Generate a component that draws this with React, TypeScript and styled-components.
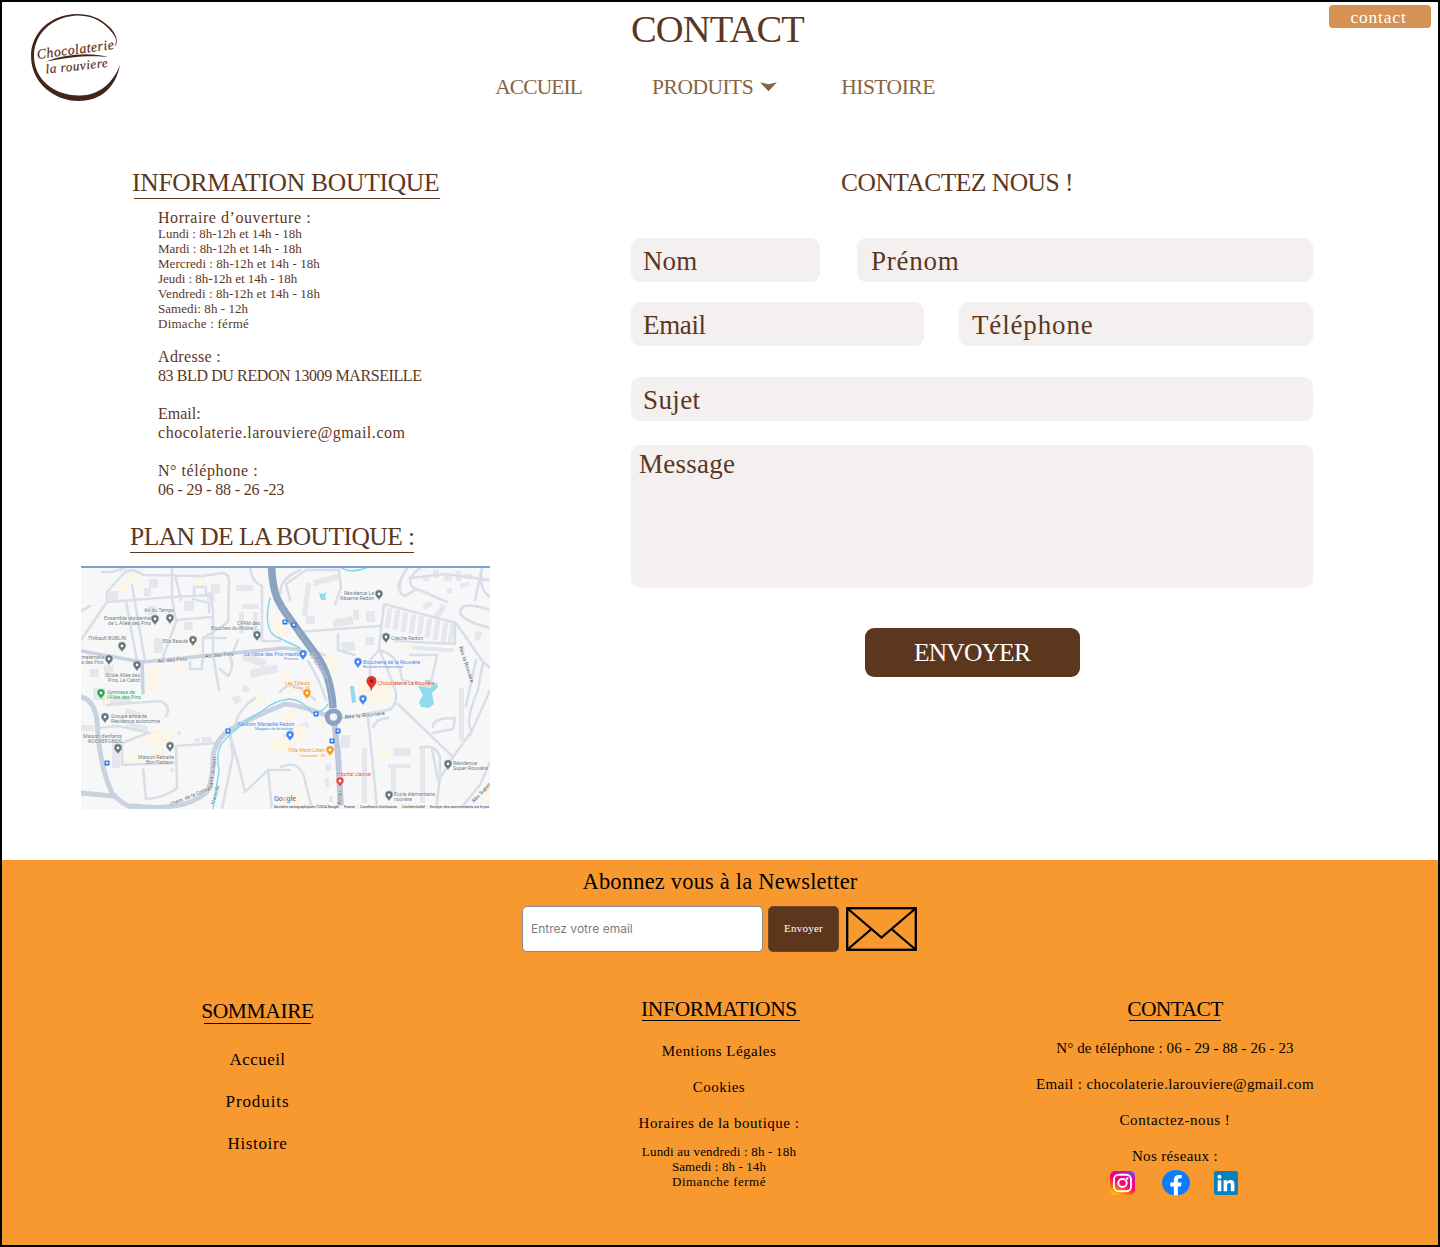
import React from "react";
import styled, { createGlobalStyle } from "styled-components";

const brown = "#5c371e";
const serif = `"Liberation Serif", "Times New Roman", serif`;

const GlobalStyle = createGlobalStyle`
  *, *::before, *::after { box-sizing: border-box; }
  body { margin: 0; background: #fff; font-family: ${serif}; color: ${brown}; }
  h1, h2, h3, p, ul { margin: 0; padding: 0; font-weight: 400; }
  ul { list-style: none; }
  a { color: inherit; text-decoration: none; }
  button { font-family: inherit; border: 0; padding: 0; cursor: pointer; }
  svg { display: block; flex: none; }
`;

type Spaced = { $ls?: number };

const Page = styled.div`
  width: 1440px;
  height: 1247px;
  border: 2px solid #000;
  display: flex;
  flex-direction: column;
  overflow: hidden;
  white-space: nowrap;
`;

const Header = styled.header`
  display: grid;
  grid-template-columns: 280px 1fr 280px;
  height: 124px;
`;

const LogoLink = styled.a`
  padding: 8px 0 0 24px;
`;

const HeaderCenter = styled.div`
  display: flex;
  flex-direction: column;
  align-items: center;
`;

const PageTitle = styled.h1`
  font-size: 38.5px;
  line-height: 44px;
  letter-spacing: -0.8px;
  margin: 5px 5px 0 0;
`;

const Nav = styled.nav`
  display: flex;
  align-items: center;
  height: 24px;
  margin: 24px 10px 0 0;
  color: #88643f;
`;

const NavLink = styled.a<Spaced & { $gap?: number }>`
  display: flex;
  align-items: center;
  gap: 7px;
  font-size: 21.5px;
  line-height: 24px;
  letter-spacing: ${(p) => p.$ls ?? 0}px;
  margin-right: ${(p) => p.$gap ?? 0}px;
`;

const ContactButton = styled.button`
  justify-self: end;
  width: 102px;
  height: 23px;
  margin: 3px 7px 0 0;
  border-radius: 4px;
  background: #d49254;
  color: #fff;
  font-size: 17.5px;
  line-height: 23px;
  letter-spacing: 0.8px;
  padding-top: 1px;
  padding-right: 3px;
`;

const Main = styled.main`
  display: flex;
  height: 734px;
`;

const ShopColumn = styled.section`
  width: 629px;
  padding: 43px 0 0 79px;
`;

const SectionTitle = styled.h2<Spaced>`
  font-size: 25.5px;
  line-height: 28px;
  letter-spacing: ${(p) => p.$ls ?? 0}px;
`;

const ShopTitle = styled(SectionTitle)<{ $indent: number }>`
  margin-left: ${(p) => p.$indent}px;
`;

const Rule = styled.div<{ $width: number; $indent?: number; $color?: string }>`
  width: ${(p) => p.$width}px;
  height: 1px;
  margin-left: ${(p) => p.$indent ?? 0}px;
  background: ${(p) => p.$color ?? brown};
`;

const TitleRule = styled(Rule)`
  margin-top: 1px;
`;

const Details = styled.div`
  padding: 9px 0 5px 77px;
`;

const DetailLine = styled.p<Spaced>`
  font-size: 16px;
  line-height: 19px;
  letter-spacing: ${(p) => p.$ls ?? 0}px;
`;

const HourLine = styled.p<Spaced>`
  font-size: 13px;
  line-height: 15px;
  letter-spacing: ${(p) => p.$ls ?? 0}px;
`;

const Hours = styled.div`
  margin: -1px 0 16px;
`;

const DetailGroup = styled.div`
  margin-bottom: 19px;
`;

const MapFrame = styled.div`
  width: 409px;
  height: 243px;
  margin-top: 13px;
`;

const FormColumn = styled.form`
  width: 682px;
  padding-top: 43px;
  display: flex;
  flex-direction: column;
  align-items: center;
`;

const FormTitle = styled(SectionTitle)`
  padding-right: 30px;
`;

const FieldRow = styled.div<{ $columns: string; $gap?: number; $top: number }>`
  width: 100%;
  display: grid;
  grid-template-columns: ${(p) => p.$columns};
  column-gap: ${(p) => p.$gap ?? 0}px;
  margin-top: ${(p) => p.$top}px;
`;

const Field = styled.label<Spaced & { $pad?: number }>`
  height: 44px;
  border-radius: 9px;
  background: #f4f0ef;
  padding: 1px 0 0 ${(p) => p.$pad ?? 12}px;
  font-size: 27px;
  line-height: 44px;
  letter-spacing: ${(p) => p.$ls ?? 0}px;
`;

const MessageField = styled(Field)`
  height: 143px;
  line-height: 37px;
`;

const SubmitButton = styled.button`
  width: 215px;
  height: 49px;
  margin-top: 40px;
  border-radius: 9px;
  background: ${brown};
  color: #fff;
  font-size: 25.5px;
  line-height: 49px;
  letter-spacing: -0.8px;
`;

const Footer = styled.footer`
  flex: 1;
  background: #f8992f;
  color: #000;
`;

const NewsletterTitle = styled.h2`
  text-align: center;
  font-size: 22.5px;
  line-height: 26px;
  letter-spacing: 0.18px;
  padding: 9px 0 0;
`;

const NewsletterRow = styled.div`
  display: flex;
  align-items: center;
  margin: 10px 0 0 520px;
  height: 47px;
`;

const EmailBox = styled.label`
  width: 241px;
  height: 46px;
  border: 1px solid #8b8b8b;
  border-radius: 5px;
  background: #fff;
  color: #7d7d7d;
  padding-left: 8px;
  font: 12px/43px Inter, sans-serif;
`;

const NewsletterButton = styled.button`
  width: 71px;
  height: 46px;
  margin: 0 7px 0 5px;
  border: 1px solid #734622;
  border-radius: 5px;
  background: ${brown};
  color: #fff;
  font-size: 11px;
  letter-spacing: 0.25px;
  padding-bottom: 2px;
`;

const FooterColumns = styled.div`
  display: grid;
  grid-template-columns: 512px 412px 498px;
  padding-top: 45px;
`;

const FooterColumn = styled.section<{ $top: number; $shift?: number }>`
  display: flex;
  flex-direction: column;
  align-items: center;
  padding-top: ${(p) => p.$top}px;
  padding-right: ${(p) => p.$shift ?? 0}px;
`;

const FooterTitle = styled.h3<Spaced & { $height?: number }>`
  font-size: 21.5px;
  line-height: 24px;
  height: ${(p) => p.$height ?? 24}px;
  letter-spacing: ${(p) => p.$ls ?? 0}px;
`;

const FooterList = styled.ul<{ $top: number; $size: number; $step: number }>`
  margin-top: ${(p) => p.$top}px;
  font-size: ${(p) => p.$size}px;
  line-height: ${(p) => p.$step}px;
  text-align: center;
`;

const FooterItem = styled.li<Spaced>`
  letter-spacing: ${(p) => p.$ls ?? 0}px;
`;

const FooterHours = styled.div`
  text-align: center;
  margin-top: 3px;
`;

const Socials = styled.div`
  display: flex;
  align-items: center;
  height: 26px;
  margin: -4px 3px 0 0;
`;

const SocialLink = styled.a<{ $gap?: number }>`
  margin-right: ${(p) => p.$gap ?? 0}px;
`;

const Logo = () => (
  <svg width="100" height="96" viewBox="26 10 100 96">
    <path
      fill="#43261a"
      d="M114.500 46.500C119 43 117 34 109 26.500C100 17.500 89 14 77 14C50 14.500 31 33 31 56C31 82 53 101 79 101C101 101 116 87 120 65C113 83 99 95.500 80 95.500C54 96 34 79 34 56C34 34 52 16.500 77 15.500C89 15.500 99 19 107.500 27.500C113 33 117.500 39 115.800 43Z"
    />
    <path fill="#43261a" d="M46 61.500C62 55 89 51.500 108 57C91 54.800 67 57 46 61.500Z" />
    <g fill="#5a2c1b" fontFamily="'Liberation Serif', serif" fontStyle="italic" stroke="#5a2c1b" strokeWidth="0.2">
      <text transform="translate(37.500 59) rotate(-7.500)" fontSize="14" textLength="78" letterSpacing="0.6" lengthAdjust="spacingAndGlyphs">
        Chocolaterie
      </text>
      <text transform="translate(46 73.500) rotate(-6)" fontSize="13" textLength="63" letterSpacing="0.6" lengthAdjust="spacingAndGlyphs">
        la rouviere
      </text>
    </g>
  </svg>
);

const road = "M81 640L107 602V592L125 572Q132 567 143 575L202 576L223 573Q229 574 229 582L228 622Q222 627 203 638V662M102 572L112 572L125 568M107 602L172 597L211 595L213 612V655L219 690M126 601L137 661M132 585L145 661M172 568V598L176 622L162 660M175 575L181 600M176 620L212 617M194 596V587H206V595M193 599L209 603V612M203 638H226M228 653Q236 665 228 676L220 669M250 568Q252 582 262 586V640M238 640L233 652M262 641H280M81 611L90 606M190 662V669H202V660M107 705L160 701Q172 706 166 716M97 728L118 726L150 733M176 746L217 743M176 746L177 788Q165 798 146 799L143 769M122 765L175 763M122 765V743L148 733M230 735L233 755L222 809M230 735Q238 760 245 792L268 770L272 809M268 770L290 770M236 723Q238 710 255 698M384 604L456 623L483 662L478 690Q464 722 472 731L453 757L440 778L436 809M384 604L379 648L396 692Q397 708 388 710L341 718M398 704L453 757M368 717L377 807M298 632L380 626M338 634V650L355 655M455 623V644L395 641M407 568Q392 591 405 596L417 589L447 602M420 568Q402 582 417 590M410 578L445 574L490 580M490 610Q460 600 460 613Q465 622 490 628M290 655Q310 648 325 655M379 650L370 660V690M379 650Q400 655 402 680L430 687L437 655L410 655M281 594Q278 580 300 570M290 600L286 584L306 570L339 570L341 588L335 604M308 661Q320 680 326 700M280 692Q290 680 303 690L315 700M373 727L378 720L388 718M433 727Q432 718 455 718L453 729L433 733M420 748Q435 743 440 757V775M432 749L438 780M460 809L480 785L490 762M281 767Q302 758 306 785L312 809M482 568L475 600M483 662L490 668M490 690Q478 718 470 735M482 568Q478 590 490 597M476 660L466 706";

const blocks: [number, number, number, number, number?][] = [
  [109, 591, 9, 9], [149, 579, 9, 9], [144, 588, 7, 8], [211, 584, 9, 9], [207, 592, 8, 9], [184, 601, 10, 10],
  [154, 638, 9, 15], [148, 606, 8, 9], [184, 622, 9, 8], [236, 585, 17, 6], [242, 604, 17, 5], [239, 612, 5, 21],
  [253, 612, 5, 21], [104, 665, 9, 12], [90, 669, 9, 8], [242, 656, 24, 8, 20], [250, 667, 28, 8, -12],
  [304, 583, 5, 33, 8], [313, 577, 26, 6, -15], [306, 616, 9, 8], [333, 618, 20, 8, -10], [353, 610, 6, 10], [341, 642, 14, 9, -8],
  [365, 637, 9, 8], [366, 611, 9, 11], [386, 608, 5, 20, 8], [394, 610, 5, 20, 8], [402, 612, 5, 20, 8], [410, 614, 5, 20, 8],
  [418, 616, 5, 20, 8], [426, 618, 5, 20, 8], [434, 620, 5, 20, 8], [442, 622, 5, 20, 8], [449, 623, 5, 20, 8], [412, 647, 42, 4, 4],
  [437, 604, 6, 15, 32], [423, 602, 9, 6, -30], [433, 570, 6, 8], [444, 576, 8, 5, 15], [456, 571, 5, 10], [460, 583, 10, 4, -15], [447, 588, 5, 5],
  [423, 576, 6, 5], [397, 582, 5, 7], [475, 631, 6, 9, 20], [464, 574, 8, 5],
  [93, 688, 12, 12], [103, 698, 28, 6, -8], [125, 710, 15, 7, 20], [80, 725, 14, 6], [112, 740, 8, 28], [126, 724, 22, 5, 12],
  [194, 738, 6, 4], [202, 737, 10, 5], [177, 731, 4, 4], [233, 696, 8, 7, -25], [242, 686, 7, 6, 20], [170, 768, 4, 4],
  [282, 728, 28, 6, -30], [341, 735, 9, 13], [362, 748, 5, 55], [393, 748, 18, 8], [388, 764, 23, 4], [391, 766, 5, 30],
  [420, 748, 5, 55], [459, 688, 5, 53], [325, 764, 6, 7], [325, 778, 4, 9], [329, 796, 4, 6],
];

const sand: [number, number, number, number, number?][] = [
  [127, 573, 9, 8], [119, 583, 8, 8], [195, 578, 9, 8], [191, 640, 8, 8], [150, 667, 8, 24], [165, 617, 12, 7], [119, 646, 9, 6], [104, 700, 6, 5],
  [140, 732, 32, 9], [155, 733, 7, 32], [124, 756, 38, 5], [175, 666, 7, 5], [258, 693, 6, 10], [275, 621, 12, 14, -35],
  [324, 656, 14, 13, -25], [359, 680, 30, 22], [270, 738, 25, 12, -18], [293, 726, 13, 12], [379, 750, 10, 8], [404, 645, 8, 5],
  [281, 676, 11, 7, 30], [317, 722, 8, 4], [283, 712, 14, 7, -20], [484, 790, 8, 13, 30], [329, 782, 6, 4], [265, 590, 3, 6],
];

const pins: [number, number, string][] = [
  [155, 620, "#627782"], [170, 619, "#627782"], [122, 647, "#627782"], [193, 641, "#627782"], [109, 660, "#627782"],
  [137, 666, "#627782"], [257, 636, "#627782"], [379, 595, "#627782"], [386, 638, "#627782"], [105, 718, "#627782"],
  [118, 749, "#627782"], [170, 747, "#627782"], [448, 765, "#627782"], [389, 796, "#627782"], [101, 694, "#2da44e"],
  [307, 694, "#f29a1f"], [330, 751, "#f29a1f"], [303, 655, "#4285f4"], [358, 663, "#4285f4"], [363, 700, "#4285f4"],
  [290, 736, "#4285f4"], [340, 782, "#ea4b41"],
];

type Label = [string, number, number, number, string, number?];
const ink = "#6c7d88";
const labels: Label[] = [
  ["Air du Temps", 144, 612, 30, ink], ["Ensemble résidentiel", 104, 620, 48, ink], ["de L Allée des Pins", 108, 625, 43, ink],
  ["Thibault BOBLIN", 88, 640, 38, ink], ["Ella Beauté", 163, 643, 25, ink], ["CPAM des", 237, 625, 23, ink],
  ["Bouches-du-Rhône /…", 211, 630, 49, ink], ["maternelle", 81.5, 659, 23, ink], ["e des Pins", 81.5, 664, 22, ink],
  ["École Allée des", 106, 677, 34, ink], ["Pins, Le Cabot", 108, 682, 32, ink], ["Gymnase de", 107, 694, 28, "#35a05a"],
  ["l'Allée des Pins", 107, 699, 34, "#35a05a"], ["Groupe entraide", 111, 718, 36, ink], ["Résidence autonomie", 111, 723, 49, ink],
  ["Maison d'enfants", 83, 738, 39, ink], ["ROCHEFONDS", 88, 743, 34, ink], ["Maison Retraite", 138, 759, 36, ink],
  ["Bon Pasteur", 146, 764, 27, ink], ["Résidence La", 344, 595, 30, ink], ["Réserve Redon", 340, 600, 34, ink],
  ["Crèche Redon", 391, 640, 32, ink], ["La Valse des Prix-meurs", 244, 656, 55, "#4285f4"], ["Primeur", 284, 660, 14, "#4285f4"],
  ["Boucherie de la Rouvière", 363, 664, 57, "#4285f4"], ["Boucherie-charcuterie", 363, 668, 40, "#4285f4"],
  ["Les Tilleuls", 285, 685, 25, "#ec961d"], ["Pizza • $$", 293, 689, 17, "#ec961d"], ["Chocolaterie La Rouvière", 378, 685, 57, "#e53e32"],
  ["Weldom Marseille Redon", 237, 726, 57, "#4285f4"], ["Magasin de bricolage", 255, 730, 38, "#4285f4"],
  ["Villa Mont Liban", 288, 752, 37, "#ec961d"], ["Libanaise • $$", 300, 757, 25, "#ec961d"], ["Hôpital clairval", 337, 776, 34, "#ea4b41"],
  ["Résidence", 453, 765, 24, ink], ["Super Rouvière", 453, 770, 35, ink], ["École élémentaire", 394, 796, 41, ink], ["rouvière", 394, 801, 18, ink],
  ["All. des Pins", 158, 663, 29, "#545f6b", -5], ["All. des Pins", 205, 658, 29, "#545f6b", -5], ["Rés la Rouvière", 345, 719, 40, "#545f6b", -6],
  ["Rés la Rouvière", 459, 647, 38, "#545f6b", 72], ["Rés Super", 474, 803, 25, "#545f6b", -47], ["Bd du Redon", 309, 654, 30, "#6f87a8", 57],
  ["Bd du", 341, 805, 14, "#545f6b", -86], ["Chem. de la Colline", 171, 806, 43, "#545f6b", -22], ["Saint-Joseph", 212, 789, 32, "#545f6b", -82],
  ["Marseille", 214, 805, 20, "#288fa5", -74],
];

const subtitles = new Set([660, 668, 689, 730, 757]);

const stops: [number, number][] = [[285, 622], [294, 625], [228, 731], [107, 763], [316, 714], [338, 731], [332, 741]];

const credits: [string, number, number][] = [
  ["Données cartographiques ©2024 Google", 274, 65], ["France", 344, 11], ["Conditions d'utilisation", 360, 37],
  ["Confidentialité", 402, 23], ["Envoyer des commentaires sur le pro", 430, 59],
];

const ShopMap = () => (
  <svg width="409" height="243" viewBox="81 566 409 243" fontFamily="Roboto, sans-serif">
    <rect x="81" y="566" width="409" height="243" fill="#f7f7f8" />
    {blocks.map(([x, y, w, h, r], i) => (
      <rect key={i} x={x} y={y} width={w} height={h} fill="#e5e7ec" transform={r ? `rotate(${r} ${x + w / 2} ${y + h / 2})` : undefined} />
    ))}
    {sand.map(([x, y, w, h, r], i) => (
      <rect key={i} x={x} y={y} width={w} height={h} fill="#fef7e6" stroke="#f4ebd6" strokeWidth="0.4" transform={r ? `rotate(${r} ${x + w / 2} ${y + h / 2})` : undefined} />
    ))}
    <path fill="#8fdaec" d="M319 593L323 594L327 592L325 596L326 600L321 600ZM418 686L424 687L437 683L438 687L432 693L434 704L429 708L421 707L419 702L423 695ZM350 686H354L356 702L352 703ZM425 680H430V684H425Z" />
    <g fill="none" strokeLinecap="round" strokeLinejoin="round">
      <path stroke="#d9dfe8" strokeWidth="2.600" d={road} />
      <path stroke="#c8d3df" strokeWidth="3.600" d="M81 651L142 662L285 648L300 650M142 662L143 693" />
      <path stroke="#c8d3df" strokeWidth="5" d="M81 697Q94 700 97 720Q99 765 112 793Q125 809 145 809M81 793L113 796M133 806Q185 812 207 792Q213 780 213 760Q213 743 228 731Q248 719 285 704Q300 705 328 716" />
      <path stroke="#7fd7e6" strokeWidth="1.400" d="M213 809L219 770Q215 748 225 740Q240 724 262 711Q275 700 290 699Q303 700 312 713Q324 712 328 704M270 598Q262 632 279 638L300 648M340 567Q350 574 366 568" />
      <path stroke="#bccadb" strokeWidth="6" d="M334 721L338 754L341 809" />
      <path stroke="#8ba2c0" strokeWidth="7.500" strokeLinecap="butt" d="M271.500 566C273 603 282 606 300 633L317 656Q331 676 333 708" />
      <path stroke="#b9c8da" strokeWidth="0.500" d="M281 606L300 634L317 657Q330 677 332 706" />
    </g>
    <circle cx="333.500" cy="717" r="6.200" fill="#f1f4f7" stroke="#8ba2c0" strokeWidth="5" />
    <rect x="81" y="566" width="409" height="2" fill="#839fd0" />
    {stops.map(([x, y]) => (
      <g key={`${x}-${y}`}>
        <rect x={x - 2.5} y={y - 2.5} width="5" height="5" rx="0.800" fill="#2875e8" />
        <rect x={x - 1.2} y={y - 1.4} width="2.400" height="2.400" fill="#d3e4fb" />
      </g>
    ))}
    {labels.map(([text, x, y, width, fill, angle], i) => (
      <text key={i} x={x} y={y} textLength={width} lengthAdjust="spacingAndGlyphs" fontSize={subtitles.has(y) ? 4.3 : 5.3} fill={fill} stroke="#fff" strokeOpacity="0.7" strokeWidth="0.500" paintOrder="stroke" transform={angle ? `rotate(${angle} ${x} ${y})` : undefined}>
        {text}
      </text>
    ))}
    {pins.map(([x, y, fill]) => (
      <g key={`${x}-${y}`} transform={`translate(${x} ${y})`}>
        <path fill={fill} stroke="#fff" strokeWidth="0.400" d="M0 5.500C-1 2.500-4 1.600-4-1.200A4 4 0 0 1 4-1.200C4 1.600 1 2.500 0 5.500Z" />
        <circle cy="-1.100" r="1.300" fill="#fff" />
      </g>
    ))}
    <path fill="#e23329" d="M371.500 691C370.500 686 366.500 685 366.500 681A5 5 0 0 1 376.500 681C376.500 685 372.500 686 371.500 691Z" />
    <circle cx="371.500" cy="681" r="1.700" fill="#8e1c17" />
    <text x="274" y="801" fontSize="7" fontWeight="500" textLength="22">
      <tspan fill="#4285f4">G</tspan><tspan fill="#ea4335">o</tspan><tspan fill="#fbbc05">o</tspan><tspan fill="#4285f4">g</tspan><tspan fill="#34a853">l</tspan><tspan fill="#ea4335">e</tspan>
    </text>
    <rect x="272" y="805.500" width="218" height="3.500" fill="#f3f4f5" />
    {credits.map(([text, x, width]) => (
      <text key={text} x={x} y="808.300" fontSize="3.800" fill="#333" textLength={width} lengthAdjust="spacingAndGlyphs">{text}</text>
    ))}
  </svg>
);

const Envelope = () => (
  <svg width="71" height="44" viewBox="0 0 71 44" fill="none" stroke="#000" strokeWidth="2.300">
    <rect x="1.200" y="1.200" width="68.600" height="41.600" />
    <path d="M1.500 1.500L35.500 30.500L69.500 1.500M1.500 42.500L25.500 22M69.500 42.500L45.500 22" />
  </svg>
);

const Instagram = () => (
  <svg width="26" height="24" viewBox="0 0 26 24">
    <defs>
      <linearGradient id="igBase" x1="0.2" y1="1" x2="0.7" y2="0">
        <stop offset="0" stopColor="#ffc400" />
        <stop offset="0.25" stopColor="#ff6a13" />
        <stop offset="0.5" stopColor="#ff006d" />
        <stop offset="0.78" stopColor="#e500a0" />
        <stop offset="1" stopColor="#7b3fe0" />
      </linearGradient>
    </defs>
    <rect width="25" height="24" rx="5" fill="url(#igBase)" />
    <g fill="none" stroke="#fff" strokeWidth="1.900">
      <rect x="4" y="3.800" width="17" height="16.400" rx="4.500" />
      <ellipse cx="12.500" cy="12" rx="4.200" ry="4" />
    </g>
    <circle cx="17.300" cy="7.500" r="1.200" fill="#fff" />
  </svg>
);

const Facebook = () => (
  <svg width="28" height="26" viewBox="0 0 28 26">
    <ellipse cx="14" cy="12.700" rx="14" ry="12.700" fill="#0a7cff" />
    <path fill="#fff" d="M11.800 25.500V16.400H8.300V12.600H11.800V10C11.800 6.600 13.800 4.900 17 4.900C18.400 4.900 19.700 5.100 19.700 5.100V8.300H18C16.400 8.300 15.900 9.200 15.900 10.200V12.600H19.600L19 16.400H15.900V25.500Z" />
  </svg>
);

const LinkedIn = () => (
  <svg width="24" height="24" viewBox="0 0 24 24">
    <rect width="24" height="24" rx="2" fill="#0a80bd" />
    <circle cx="5.500" cy="5.800" r="2.100" fill="#fff" />
    <path fill="#fff" d="M3.700 9.300H7.300V20.300H3.700ZM9.600 9.300H13V10.900C13.600 9.800 14.900 9 16.500 9C19.700 9 20.400 11.200 20.400 14V20.300H16.800V14.800C16.800 13.400 16.700 12 15.100 12C13.500 12 13.200 13.400 13.200 14.700V20.300H9.600Z" />
  </svg>
);

const openingHours: [string, number][] = [
  ["Lundi : 8h-12h et 14h - 18h", 0], ["Mardi : 8h-12h et 14h - 18h", -0.03], ["Mercredi : 8h-12h et 14h - 18h", 0.05],
  ["Jeudi : 8h-12h et 14h - 18h", -0.03], ["Vendredi : 8h-12h et 14h - 18h", 0.08], ["Samedi: 8h - 12h", 0.06], ["Dimache : férmé", 0.25],
];

export default function App() {
  return (
    <Page>
      <GlobalStyle />
      <Header>
        <LogoLink href="#"><Logo /></LogoLink>
        <HeaderCenter>
          <PageTitle>CONTACT</PageTitle>
          <Nav>
            <NavLink href="#" $ls={-0.9} $gap={70}>ACCUEIL</NavLink>
            <NavLink href="#" $ls={-0.5} $gap={64}>
              PRODUITS
              <svg width="17" height="10" viewBox="0 0 17 10"><path fill="currentColor" d="M0 .300L8.500 2.200L17 .300L8.500 9.300Z" /></svg>
            </NavLink>
            <NavLink href="#" $ls={-0.5}>HISTOIRE</NavLink>
          </Nav>
        </HeaderCenter>
        <ContactButton>contact</ContactButton>
      </Header>

      <Main>
        <ShopColumn>
          <ShopTitle $indent={51} $ls={-0.25}>INFORMATION BOUTIQUE</ShopTitle>
          <TitleRule $width={306} $indent={53} />
          <Details>
            <DetailLine $ls={0.54}>Horraire d’ouverture :</DetailLine>
            <Hours>
              {openingHours.map(([text, ls]) => <HourLine key={text} $ls={ls}>{text}</HourLine>)}
            </Hours>
            <DetailGroup>
              <DetailLine $ls={0.35}>Adresse :</DetailLine>
              <DetailLine $ls={-0.4}>83 BLD DU REDON 13009 MARSEILLE</DetailLine>
            </DetailGroup>
            <DetailGroup>
              <DetailLine>Email:</DetailLine>
              <DetailLine $ls={0.54}>chocolaterie.larouviere@gmail.com</DetailLine>
            </DetailGroup>
            <DetailGroup>
              <DetailLine $ls={0.55}>N° téléphone :</DetailLine>
              <DetailLine $ls={-0.15}>06 - 29 - 88 - 26 -23</DetailLine>
            </DetailGroup>
          </Details>
          <ShopTitle $indent={49} $ls={-0.55}>PLAN DE LA BOUTIQUE :</ShopTitle>
          <TitleRule $width={284} $indent={49} />
          <MapFrame><ShopMap /></MapFrame>
        </ShopColumn>

        <FormColumn>
          <FormTitle $ls={-0.52}>CONTACTEZ NOUS !</FormTitle>
          <FieldRow $columns="189px 456px" $gap={37} $top={41}>
            <Field $ls={0.1}>Nom</Field>
            <Field $ls={0.75} $pad={14}>Prénom</Field>
          </FieldRow>
          <FieldRow $columns="293px 354px" $gap={35} $top={20}>
            <Field $ls={-0.35}>Email</Field>
            <Field $ls={0.85} $pad={13}>Téléphone</Field>
          </FieldRow>
          <FieldRow $columns="682px" $top={31}>
            <Field $ls={0.4}>Sujet</Field>
          </FieldRow>
          <FieldRow $columns="682px" $top={24}>
            <MessageField $ls={0.25} $pad={8}>Message</MessageField>
          </FieldRow>
          <SubmitButton type="button">ENVOYER</SubmitButton>
        </FormColumn>
      </Main>

      <Footer>
        <NewsletterTitle>Abonnez vous à la Newsletter</NewsletterTitle>
        <NewsletterRow>
          <EmailBox>Entrez votre email</EmailBox>
          <NewsletterButton>Envoyer</NewsletterButton>
          <Envelope />
        </NewsletterRow>
        <FooterColumns>
          <FooterColumn $top={2} $shift={1}>
            <FooterTitle $ls={-0.4}>SOMMAIRE</FooterTitle>
            <Rule $width={107} $color="#000" />
            <FooterList $top={15} $size={17} $step={42}>
              <FooterItem $ls={0.45}>Accueil</FooterItem>
              <FooterItem $ls={0.9}>Produits</FooterItem>
              <FooterItem $ls={0.65}>Histoire</FooterItem>
            </FooterList>
          </FooterColumn>
          <FooterColumn $top={0} $shift={2}>
            <FooterTitle $ls={-0.35} $height={23}>INFORMATIONS</FooterTitle>
            <Rule $width={158} $indent={4} $color="#000" />
            <FooterList $top={12} $size={15} $step={36}>
              <FooterItem $ls={0.47}>Mentions Légales</FooterItem>
              <FooterItem $ls={0.45}>Cookies</FooterItem>
              <FooterItem $ls={0.5}>Horaires de la boutique :</FooterItem>
            </FooterList>
            <FooterHours>
              <HourLine $ls={0.2}>Lundi au vendredi : 8h - 18h</HourLine>
              <HourLine $ls={0.1}>Samedi : 8h - 14h</HourLine>
              <HourLine $ls={0.5}>Dimanche fermé</HourLine>
            </FooterHours>
          </FooterColumn>
          <FooterColumn $top={0}>
            <FooterTitle $ls={-0.6} $height={23}>CONTACT</FooterTitle>
            <Rule $width={92} $color="#000" />
            <FooterList $top={9} $size={15} $step={36}>
              <FooterItem $ls={0.1}>N° de téléphone : 06 - 29 - 88 - 26 - 23</FooterItem>
              <FooterItem $ls={0.37}>Email : chocolaterie.larouviere@gmail.com</FooterItem>
              <FooterItem $ls={0.55}>Contactez-nous !</FooterItem>
              <FooterItem $ls={0.35}>Nos réseaux :</FooterItem>
            </FooterList>
            <Socials>
              <SocialLink href="#" $gap={26}><Instagram /></SocialLink>
              <SocialLink href="#" $gap={24}><Facebook /></SocialLink>
              <SocialLink href="#"><LinkedIn /></SocialLink>
            </Socials>
          </FooterColumn>
        </FooterColumns>
      </Footer>
    </Page>
  );
}
